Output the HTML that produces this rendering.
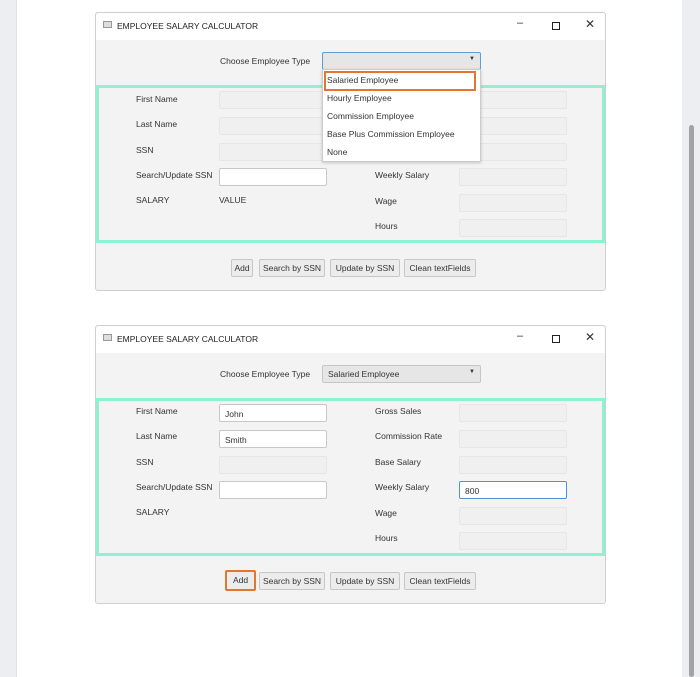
<!DOCTYPE html>
<html><head><style>
*{margin:0;padding:0;box-sizing:border-box}
body{width:700px;height:677px;background:#fff;position:relative;overflow:hidden;font-family:"Liberation Sans",sans-serif;font-size:8.5px;color:#333}
.a{position:absolute}
.win{position:absolute;left:95px;width:511px;height:279px;background:#f3f3f3;border:1px solid #cfcfcf;border-radius:3px}
.tb{position:absolute;left:0;top:0;width:100%;height:27px;background:#fff;border-radius:3px 3px 0 0}
.teal{position:absolute;left:0;top:72px;width:509px;height:158px;border:3px solid #8ef2d2}
.f{position:absolute;width:108px;height:18px;background:#f0f0f0;border:1px solid #e6e6e6;border-radius:2px}
.w{background:#fff;border:1px solid #c8c8c8}
.lb{position:absolute;white-space:nowrap}
.btn{position:absolute;top:246px;height:18px;background:#ececec;border:1px solid #c6c6c6;border-radius:2px;text-align:center;line-height:16px}
</style></head><body>
<div class="a" style="left:0;top:0;width:17px;height:677px;background:#eceef1;border-right:1px solid #e2e2e5"></div>
<div class="a" style="left:682px;top:0;width:18px;height:677px;background:#eceef1"></div>
<div class="a" style="left:689px;top:125px;width:5px;height:552px;background:#a3a3a7;border-radius:3px"></div>

<!-- window 1 -->
<div class="win" style="top:12px">
 <div class="tb">
  <div class="a" style="left:7px;top:8px;width:9px;height:7px;background:#ddd;border:1px solid #999"></div>
  <div class="lb" style="left:21px;top:8px;color:#222">EMPLOYEE SALARY CALCULATOR</div>
  <div class="lb" style="left:421px;top:4px;font-size:11px">–</div>
  <div class="a" style="left:456px;top:9px;width:8px;height:8px;border:1px solid #222"></div>
  <div class="lb" style="left:489px;top:4px;font-size:12px">✕</div>
 </div>
 <div class="lb" style="left:124px;top:43px">Choose Employee Type</div>
 <div class="a" style="left:226px;top:39px;width:159px;height:18px;background:#e6e6e6;border:1px solid #5aa0d8;border-radius:2px"><div class="lb" style="right:5px;top:3px;font-size:6px">▼</div></div>
 <div class="teal"></div>
 <div class="lb" style="left:40px;top:81px">First Name</div>
 <div class="lb" style="left:40px;top:106px">Last Name</div>
 <div class="lb" style="left:40px;top:132px">SSN</div>
 <div class="lb" style="left:40px;top:157px">Search/Update SSN</div>
 <div class="lb" style="left:40px;top:182px">SALARY</div>
 <div class="lb" style="left:123px;top:182px">VALUE</div>
 <div class="lb" style="left:279px;top:157px">Weekly Salary</div>
 <div class="lb" style="left:279px;top:183px">Wage</div>
 <div class="lb" style="left:279px;top:208px">Hours</div>
 <div class="f" style="left:123px;top:78px"></div>
 <div class="f" style="left:123px;top:104px"></div>
 <div class="f" style="left:123px;top:130px"></div>
 <div class="f w" style="left:123px;top:155px"></div>
 <div class="f" style="left:363px;top:78px"></div>
 <div class="f" style="left:363px;top:104px"></div>
 <div class="f" style="left:363px;top:130px"></div>
 <div class="f" style="left:363px;top:155px"></div>
 <div class="f" style="left:363px;top:181px"></div>
 <div class="f" style="left:363px;top:206px"></div>
 <div class="a" style="left:226px;top:56px;width:159px;height:93px;background:#fff;border:1px solid #ccc;box-shadow:0 1px 3px rgba(0,0,0,.2)">
  <div class="a" style="left:1px;top:1px;width:152px;height:20px;border:2px solid #e2762f"></div>
  <div class="lb" style="left:4px;top:5px">Salaried Employee</div>
  <div class="lb" style="left:4px;top:23px">Hourly Employee</div>
  <div class="lb" style="left:4px;top:41px">Commission Employee</div>
  <div class="lb" style="left:4px;top:59px">Base Plus Commission Employee</div>
  <div class="lb" style="left:4px;top:77px">None</div>
 </div>
 <div class="btn" style="left:135px;width:22px">Add</div>
 <div class="btn" style="left:163px;width:66px">Search by SSN</div>
 <div class="btn" style="left:234px;width:70px">Update by SSN</div>
 <div class="btn" style="left:308px;width:72px">Clean textFields</div>
</div>

<!-- window 2 -->
<div class="win" style="top:325px">
 <div class="tb">
  <div class="a" style="left:7px;top:8px;width:9px;height:7px;background:#ddd;border:1px solid #999"></div>
  <div class="lb" style="left:21px;top:8px;color:#222">EMPLOYEE SALARY CALCULATOR</div>
  <div class="lb" style="left:421px;top:4px;font-size:11px">–</div>
  <div class="a" style="left:456px;top:9px;width:8px;height:8px;border:1px solid #222"></div>
  <div class="lb" style="left:489px;top:4px;font-size:12px">✕</div>
 </div>
 <div class="lb" style="left:124px;top:43px">Choose Employee Type</div>
 <div class="a" style="left:226px;top:39px;width:159px;height:18px;background:#e6e6e6;border:1px solid #c6c6c6;border-radius:2px"><div class="lb" style="left:5px;top:3px">Salaried Employee</div><div class="lb" style="right:5px;top:3px;font-size:6px">▼</div></div>
 <div class="teal"></div>
 <div class="lb" style="left:40px;top:80px">First Name</div>
 <div class="lb" style="left:40px;top:105px">Last Name</div>
 <div class="lb" style="left:40px;top:131px">SSN</div>
 <div class="lb" style="left:40px;top:156px">Search/Update SSN</div>
 <div class="lb" style="left:40px;top:181px">SALARY</div>
 <div class="lb" style="left:279px;top:80px">Gross Sales</div>
 <div class="lb" style="left:279px;top:105px">Commission Rate</div>
 <div class="lb" style="left:279px;top:131px">Base Salary</div>
 <div class="lb" style="left:279px;top:156px">Weekly Salary</div>
 <div class="lb" style="left:279px;top:182px">Wage</div>
 <div class="lb" style="left:279px;top:207px">Hours</div>
 <div class="f w" style="left:123px;top:78px"><div class="lb" style="left:5px;top:4px">John</div></div>
 <div class="f w" style="left:123px;top:104px"><div class="lb" style="left:5px;top:4px">Smith</div></div>
 <div class="f" style="left:123px;top:130px"></div>
 <div class="f w" style="left:123px;top:155px"></div>
 <div class="f" style="left:363px;top:78px"></div>
 <div class="f" style="left:363px;top:104px"></div>
 <div class="f" style="left:363px;top:130px"></div>
 <div class="f w" style="left:363px;top:155px;border:1px solid #4a93d6"><div class="lb" style="left:5px;top:4px">800</div></div>
 <div class="f" style="left:363px;top:181px"></div>
 <div class="f" style="left:363px;top:206px"></div>
 <div class="btn" style="left:129px;width:31px;height:21px;top:244px;border:2px solid #e2762f;background:#ececec;line-height:17px">Add</div>
 <div class="btn" style="left:163px;width:66px">Search by SSN</div>
 <div class="btn" style="left:234px;width:70px">Update by SSN</div>
 <div class="btn" style="left:308px;width:72px">Clean textFields</div>
</div>
</body></html>
